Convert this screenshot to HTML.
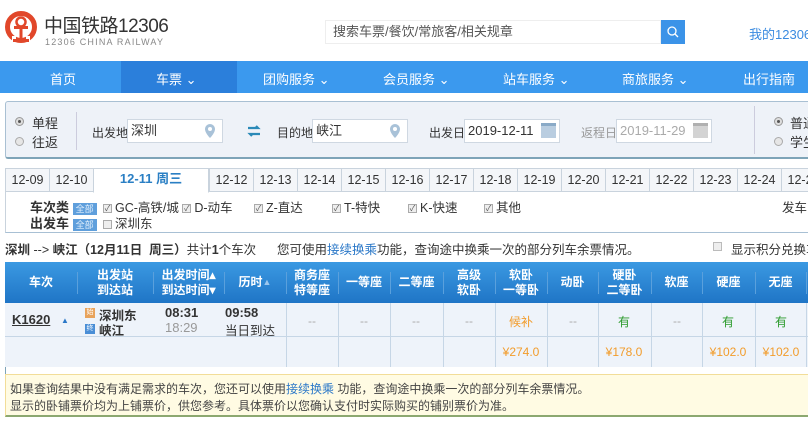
<!DOCTYPE html>
<html><head><meta charset="utf-8"><style>
*{margin:0;padding:0;box-sizing:border-box}
body{width:808px;height:422px;overflow:hidden;background:#fff;font-family:"Liberation Sans","Noto Sans CJK SC",sans-serif;font-size:12px;color:#333;position:relative}
.a{position:absolute;white-space:nowrap}
.nav{position:absolute;left:0;top:61px;width:808px;height:32px;background:#3b99ee}
.nav span{position:absolute;top:8px;color:#fff;font-size:13px}
.inp{position:absolute;height:24px;border:1px solid #cfd8e2;background:#fff;font-size:13px;line-height:22px;padding-left:3px}
.lb{font-size:12px;top:124px}
.tabs div{position:absolute;top:168px;height:24px;border-left:1px solid #c9d3dd;border-top:1px solid #c9d3dd;border-bottom:1px solid #c9d3dd;width:44px;text-align:center;line-height:22px;font-size:12.5px;background:#f4f6f9;color:#333}
.cb{display:inline-block;width:9px;height:9px;border:1px solid #aaa;background:#eee;vertical-align:middle;margin-right:3px;font-size:8px;line-height:7px;text-align:center;color:#555}
.badge{display:inline-block;background:#5f9fdc;color:#dfeefc;font-size:9px;padding:0 3px;line-height:12px;vertical-align:middle;font-weight:normal}
.th{position:absolute;top:262px;height:41px;color:#fff;font-weight:bold;font-size:12px;text-align:center;line-height:15px;display:flex;align-items:center;justify-content:center}
.sep{position:absolute;top:272px;width:1px;height:22px;background:#5aa0dc}
.vl{position:absolute;top:303px;width:1px;height:64px;background:#c6d6e6}
.c{position:absolute;text-align:center;width:52px;font-size:12px}
</style></head><body>
<svg class="a" style="left:4px;top:9px" width="36" height="40" viewBox="0 0 36 40">
<circle cx="17" cy="18" r="13.5" fill="none" stroke="#e1472a" stroke-width="5"/>
<rect x="8" y="27" width="4" height="6" fill="#fff"/><rect x="22" y="27" width="4" height="6" fill="#fff"/>
<circle cx="17" cy="13" r="4.5" fill="none" stroke="#e1472a" stroke-width="2.5"/>
<rect x="10" y="17" width="14" height="3" fill="#e1472a"/>
<rect x="15.5" y="19" width="3" height="12" fill="#e1472a"/>
<rect x="9" y="30" width="16" height="3" fill="#e1472a"/>
</svg>
<div class="a" style="left:44px;top:11px;font-size:19px;color:#333;letter-spacing:-0.5px">中国铁路12306</div>
<div class="a" style="left:45px;top:37px;font-size:9px;color:#888;letter-spacing:1.2px">12306 CHINA RAILWAY</div>
<div class="a" style="left:325px;top:20px;width:336px;height:24px;border:1px solid #eee;background:#fff;font-size:13px;line-height:22px;padding-left:7px;color:#555">搜索车票/餐饮/常旅客/相关规章</div>
<div class="a" style="left:661px;top:20px;width:24px;height:24px;background:#3b93e8">
<svg width="24" height="24"><circle cx="11" cy="11" r="4" stroke="#fff" stroke-width="1.3" fill="none"/><line x1="14" y1="14" x2="17" y2="17" stroke="#fff" stroke-width="1.3"/></svg></div>
<div class="a" style="left:749px;top:24px;font-size:13px;color:#3b8be0">我的12306</div>
<div class="nav">
<div style="position:absolute;left:121px;top:0;width:116px;height:32px;background:#2b7fdb"></div>
<span style="left:50px">首页</span>
<span style="left:156px">车票 ⌄</span>
<span style="left:263px">团购服务 ⌄</span>
<span style="left:383px">会员服务 ⌄</span>
<span style="left:503px">站车服务 ⌄</span>
<span style="left:622px">商旅服务 ⌄</span>
<span style="left:743px">出行指南 ⌄</span>
</div>
<div class="a" style="left:5px;top:101px;width:810px;height:58px;background:#eef2f8;border:1px solid #a9c0d3;border-bottom:2px solid #7ea4b8;border-radius:3px"></div>
<div class="a" style="left:15px;top:117px;width:9px;height:9px;border-radius:50%;border:1px solid #999;background:#ddd"><div style="width:3px;height:3px;margin:2px;background:#555;border-radius:50%"></div></div>
<div class="a" style="left:15px;top:137px;width:9px;height:9px;border-radius:50%;border:1px solid #aaa;background:#e6e6e6"></div>
<div class="a" style="left:32px;top:113px;font-size:13px">单程</div>
<div class="a" style="left:32px;top:132px;font-size:13px">往返</div>
<div class="a" style="left:76px;top:112px;width:1px;height:38px;background:#ccd"></div>
<div class="a lb" style="left:92px">出发地</div>
<div class="inp" style="left:127px;top:119px;width:96px">深圳</div>
<svg class="a" style="left:204px;top:123px" width="12" height="16"><path d="M6 1a5 5 0 0 1 5 5c0 4-5 9-5 9s-5-5-5-9a5 5 0 0 1 5-5z" fill="#a9c2d8"/><circle cx="6" cy="6" r="2" fill="#fff"/></svg>
<svg class="a" style="left:247px;top:125px" width="14" height="12"><path d="M1 3h10l-2-2M13 9H3l2 2" stroke="#2b8ab8" stroke-width="2.2" fill="none"/></svg>
<div class="a lb" style="left:277px">目的地</div>
<div class="inp" style="left:312px;top:119px;width:96px">峡江</div>
<svg class="a" style="left:389px;top:123px" width="12" height="16"><path d="M6 1a5 5 0 0 1 5 5c0 4-5 9-5 9s-5-5-5-9a5 5 0 0 1 5-5z" fill="#a9c2d8"/><circle cx="6" cy="6" r="2" fill="#fff"/></svg>
<div class="a lb" style="left:429px">出发日</div>
<div class="inp" style="left:464px;top:119px;width:96px">2019-12-11</div>
<div class="a" style="left:541px;top:123px;width:15px;height:15px;background:#b9cde0;border-top:3px solid #8aaac7"></div>
<div class="a lb" style="left:581px;color:#999">返程日</div>
<div class="inp" style="left:616px;top:119px;width:96px;color:#aaa">2019-11-29</div>
<div class="a" style="left:693px;top:123px;width:15px;height:15px;background:#d3d3d3;border-top:3px solid #b0b0b0"></div>
<div class="a" style="left:754px;top:106px;width:1px;height:48px;background:#ccd"></div>
<div class="a" style="left:774px;top:117px;width:9px;height:9px;border-radius:50%;border:1px solid #999;background:#ddd"><div style="width:3px;height:3px;margin:2px;background:#555;border-radius:50%"></div></div>
<div class="a" style="left:774px;top:137px;width:9px;height:9px;border-radius:50%;border:1px solid #aaa;background:#e6e6e6"></div>
<div class="a" style="left:790px;top:113px;font-size:13px">普通</div>
<div class="a" style="left:790px;top:132px;font-size:13px">学生</div>
<div class="tabs">
<div style="left:5px">12-09</div><div style="left:49px">12-10</div>
<div style="left:93px;width:116px;background:#fff;border-bottom:1px solid #fff;color:#2a7fc4;font-weight:bold;font-size:13px;height:25px;border-right:1px solid #c9d3dd;line-height:20px">12-11 周三</div>
<div style="left:209px">12-12</div><div style="left:253px">12-13</div><div style="left:297px">12-14</div><div style="left:341px">12-15</div><div style="left:385px">12-16</div><div style="left:429px">12-17</div><div style="left:473px">12-18</div><div style="left:517px">12-19</div><div style="left:561px">12-20</div><div style="left:605px">12-21</div><div style="left:649px">12-22</div><div style="left:693px">12-23</div><div style="left:737px">12-24</div><div style="left:781px">12-25</div>
</div>
<div class="a" style="left:5px;top:192px;width:810px;height:41px;border:1px solid #c9d3dd;border-top:none;border-bottom:1px solid #a8c0d4"></div>
<div class="a" style="left:30px;top:197px;font-size:13px;font-weight:bold">车次类 <span class="badge">全部</span></div>
<div class="a" style="left:103px;top:197px;font-size:12.5px"><span class="cb">✓</span>GC-高铁/城 <span class="cb">✓</span>D-动车</div>
<div class="a" style="left:254px;top:197px;font-size:12.5px"><span class="cb">✓</span>Z-直达</div>
<div class="a" style="left:332px;top:197px;font-size:12.5px"><span class="cb">✓</span>T-特快</div>
<div class="a" style="left:408px;top:197px;font-size:12.5px"><span class="cb">✓</span>K-快速</div>
<div class="a" style="left:484px;top:197px;font-size:12.5px"><span class="cb">✓</span>其他</div>
<div class="a" style="left:782px;top:197px;font-size:12.5px">发车</div>
<div class="a" style="left:30px;top:213px;font-size:13px;font-weight:bold">出发车 <span class="badge">全部</span></div>
<div class="a" style="left:103px;top:213px;font-size:12.5px"><span class="cb"></span>深圳东</div>
<div class="a" style="left:5px;top:239px;font-size:12.5px"><b>深圳</b> --&gt; <b>峡江（12月11日&nbsp; 周三）</b>共计<b>1</b>个车次&nbsp;&nbsp;&nbsp;&nbsp;&nbsp; 您可使用<span style="color:#2b78c8">接续换乘</span>功能，查询途中换乘一次的部分列车余票情况。</div>
<div class="a" style="left:713px;top:242px;width:9px;height:9px;border:1px solid #bbb;background:#eee"></div>
<div class="a" style="left:731px;top:239px;font-size:12.5px">显示积分兑换车</div>
<div class="a" style="left:5px;top:262px;width:810px;height:41px;background:linear-gradient(#3b99e2,#1f75c6)"></div>
<div class="th" style="left:5px;width:72px">车次</div>
<div class="th" style="left:77px;width:76px">出发站<br>到达站</div>
<div class="th" style="left:153px;width:71px">出发时间▴<br>到达时间▾</div>
<div class="th" style="left:224px;width:62px">历时<span style="color:#9cc7ee;font-size:9px">▲</span></div>
<div class="th" style="left:286px;width:52px">商务座<br>特等座</div>
<div class="th" style="left:338px;width:52px">一等座</div>
<div class="th" style="left:390px;width:53px">二等座</div>
<div class="th" style="left:443px;width:52px">高级<br>软卧</div>
<div class="th" style="left:495px;width:52px">软卧<br>一等卧</div>
<div class="th" style="left:547px;width:51px">动卧</div>
<div class="th" style="left:598px;width:53px">硬卧<br>二等卧</div>
<div class="th" style="left:651px;width:51px">软座</div>
<div class="th" style="left:702px;width:53px">硬座</div>
<div class="th" style="left:755px;width:51px">无座</div>
<div class="sep" style="left:77px"></div><div class="sep" style="left:153px"></div><div class="sep" style="left:224px"></div><div class="sep" style="left:286px"></div><div class="sep" style="left:338px"></div><div class="sep" style="left:390px"></div><div class="sep" style="left:443px"></div><div class="sep" style="left:495px"></div><div class="sep" style="left:547px"></div><div class="sep" style="left:598px"></div><div class="sep" style="left:651px"></div><div class="sep" style="left:702px"></div><div class="sep" style="left:755px"></div><div class="sep" style="left:806px"></div>
<div class="a" style="left:5px;top:303px;width:810px;height:64px;background:#eef3fa"></div>
<div class="a" style="left:5px;top:336px;width:810px;height:1px;background:#c6d6e6"></div>
<div class="a" style="left:5px;top:367px;width:1px;height:8px;background:#7ea4b8"></div>
<div class="vl" style="left:286px"></div><div class="vl" style="left:338px"></div><div class="vl" style="left:390px"></div><div class="vl" style="left:443px"></div><div class="vl" style="left:495px"></div><div class="vl" style="left:547px"></div><div class="vl" style="left:598px"></div><div class="vl" style="left:651px"></div><div class="vl" style="left:702px"></div><div class="vl" style="left:755px"></div><div class="vl" style="left:806px"></div>
<div class="a" style="left:12px;top:312px;font-size:13px;font-weight:bold;text-decoration:underline;color:#333">K1620</div>
<div class="a" style="left:61px;top:316px;font-size:8px;color:#2b78c8">▲</div>
<div class="a" style="left:85px;top:308px;width:10px;height:10px;background:#e8a35c;font-size:7px;color:#fff;text-align:center;line-height:10px">始</div>
<div class="a" style="left:85px;top:324px;width:10px;height:10px;background:#4a8ed6;font-size:7px;color:#fff;text-align:center;line-height:10px">终</div>
<div class="a" style="left:99px;top:305px;font-size:12.5px;font-weight:bold">深圳东</div>
<div class="a" style="left:99px;top:320px;font-size:12.5px;font-weight:bold">峡江</div>
<div class="a" style="left:165px;top:305px;font-size:13px;font-weight:bold">08:31</div>
<div class="a" style="left:165px;top:320px;font-size:13px;color:#999">18:29</div>
<div class="a" style="left:225px;top:305px;font-size:13px;font-weight:bold">09:58</div>
<div class="a" style="left:225px;top:320px;font-size:12.5px">当日到达</div>
<div class="c" style="left:286px;top:314px;color:#aaa">--</div>
<div class="c" style="left:338px;top:314px;color:#aaa">--</div>
<div class="c" style="left:390px;top:314px;color:#aaa">--</div>
<div class="c" style="left:443px;top:314px;color:#aaa">--</div>
<div class="c" style="left:495px;top:313px;color:#f29c2b">候补</div>
<div class="c" style="left:547px;top:314px;color:#aaa">--</div>
<div class="c" style="left:598px;top:313px;color:#2a9a2a">有</div>
<div class="c" style="left:651px;top:314px;color:#aaa">--</div>
<div class="c" style="left:702px;top:313px;color:#2a9a2a">有</div>
<div class="c" style="left:755px;top:313px;color:#2a9a2a">有</div>
<div class="c" style="left:495px;top:345px;color:#f29c2b">¥274.0</div>
<div class="c" style="left:598px;top:345px;color:#f29c2b">¥178.0</div>
<div class="c" style="left:702px;top:345px;color:#f29c2b">¥102.0</div>
<div class="c" style="left:755px;top:345px;color:#f29c2b">¥102.0</div>
<div class="a" style="left:5px;top:374px;width:810px;height:43px;background:#fffbe3;border:1px solid #f2dd98;border-bottom:2px solid #8ca870"></div>
<div class="a" style="left:10px;top:380px;font-size:12px;color:#444">如果查询结果中没有满足需求的车次，您还可以使用<span style="color:#2b78c8">接续换乘</span> 功能，查询途中换乘一次的部分列车余票情况。</div>
<div class="a" style="left:10px;top:397px;font-size:12px;color:#444">显示的卧铺票价均为上铺票价，供您参考。具体票价以您确认支付时实际购买的铺别票价为准。</div>
</body></html>
